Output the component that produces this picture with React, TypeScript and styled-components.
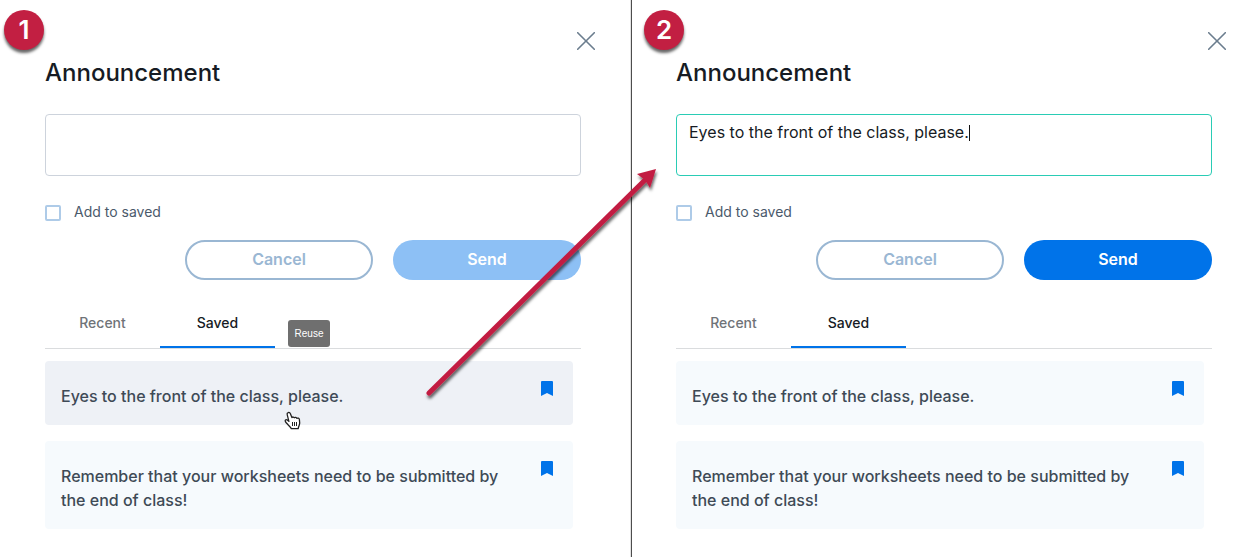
import React, { useId, useState } from "react";
import styled, { createGlobalStyle, css } from "styled-components";

const GlobalStyle = createGlobalStyle`
  * { box-sizing: border-box; }
  body {
    margin: 0;
    background: #fff;
    color: #3e4a56;
    font-family: Inter, "Open Sans", sans-serif;
  }
  button, textarea { font-family: inherit; }
`;

const Page = styled.main`
  position: relative;
  display: grid;
  grid-template-columns: calc(50% + 1px) minmax(0, 1fr);
  min-height: 100vh;
  overflow: hidden;
`;

const Panel = styled.section<{ $divided?: boolean }>`
  position: relative;
  padding: 32px 50px 28px 45px;
  ${(p) =>
    p.$divided &&
    css`
      padding: 32px 48px 28px 44px;
      border-left: 1px solid #4d4d4d;
      box-shadow: 0 0 0 1px #e2e2e2;
    `}
`;

const StepBadge = styled.span<{ $left: number }>`
  position: absolute;
  top: 10px;
  left: ${(p) => p.$left}px;
  display: grid;
  place-items: center;
  width: 40px;
  height: 40px;
  border-radius: 50%;
  background: #c21f42;
  box-shadow: 0 3px 3px rgba(0, 0, 0, 0.6);
  color: #fff;
  font-size: 26px;
  font-weight: 600;
  line-height: 40px;
`;

const TopRow = styled.div`
  display: flex;
  justify-content: flex-end;
  height: 18px;
  margin-right: -14px;
`;

const CloseButton = styled.button`
  width: 18px;
  height: 18px;
  padding: 0;
  border: 0;
  background: none;
  svg { display: block; }
`;

const Title = styled.h1`
  margin: 7px 0 25px;
  color: #161b24;
  font-size: 24px;
  font-weight: 500;
  line-height: 32px;
`;

const Field = styled.div`
  position: relative;
`;

const messageBox = css`
  padding: 5px 12px;
  border: 1px solid transparent;
  font-size: 16px;
  font-weight: 400;
  line-height: 24px;
  white-space: pre-wrap;
`;

const Message = styled.textarea<{ $active: boolean }>`
  ${messageBox}
  display: block;
  width: 100%;
  height: 62px;
  border-color: ${(p) => (p.$active ? "#2accb5" : "#cdd3dc")};
  border-radius: 4px;
  outline: 0;
  resize: none;
  background: #fff;
  color: #161b24;
`;

const CaretLayer = styled.div`
  ${messageBox}
  position: absolute;
  inset: 0;
  color: transparent;
  pointer-events: none;
`;

const Caret = styled.i`
  display: inline-block;
  width: 1px;
  height: 16px;
  background: #111;
  vertical-align: -3px;
`;

const SaveRow = styled.label`
  display: flex;
  align-items: center;
  gap: 13px;
  width: max-content;
  height: 20px;
  margin-top: 26px;
  color: #4b5a6b;
  font-size: 14px;
  line-height: 20px;
`;

const Checkbox = styled.input`
  appearance: none;
  width: 16px;
  height: 16px;
  margin: 2px 0 0;
  border: 2px solid #aecbe8;
  border-radius: 2px;
  background: #fff;
  &:checked { background: #0073e9; }
`;

const Actions = styled.div`
  display: flex;
  justify-content: flex-end;
  gap: 20px;
  margin-top: 18px;
`;

const PillButton = styled.button<{ $primary?: boolean }>`
  width: 188px;
  height: 40px;
  padding: 0 0 2px;
  border: 2px solid #9ab7d3;
  border-radius: 20px;
  background: #fff;
  color: #9ab7d3;
  font-size: 16px;
  font-weight: 600;
  ${(p) =>
    p.$primary &&
    css`
      border: 0;
      background: #0073e9;
      color: #fff;
      &:disabled { background: #8dc0f5; }
    `}
`;

const Tabs = styled.div`
  display: flex;
  margin-top: 18px;
  border-bottom: 1px solid #dadcde;
`;

const Tab = styled.button<{ $selected: boolean }>`
  width: 115px;
  height: 50px;
  padding: 0;
  border: 0;
  border-bottom: 2px solid ${(p) => (p.$selected ? "#0073e9" : "transparent")};
  background: none;
  color: ${(p) => (p.$selected ? "#161b24" : "#6f7378")};
  font-size: 14px;
  font-weight: 500;
`;

const SavedList = styled.ul`
  display: grid;
  gap: 16px;
  margin: 12px 8px 0 0;
  padding: 0;
  list-style: none;
`;

const SavedItem = styled.li<{ $hovered: boolean }>`
  position: relative;
  display: flex;
  align-items: flex-start;
  justify-content: space-between;
  gap: 24px;
  padding: 20px 20px 16px 16px;
  border-radius: 4px;
  background: ${(p) => (p.$hovered ? "#eef1f6" : "#f6fafd")};
`;

const ReuseButton = styled.button`
  padding: 3px 0 1px;
  border: 0;
  background: none;
  color: #3e4a56;
  font-size: 16px;
  font-weight: 500;
  line-height: 24px;
  text-align: left;
`;

const BookmarkButton = styled.button`
  flex: none;
  padding: 0;
  border: 0;
  background: none;
  svg { display: block; }
`;

const Tooltip = styled.span`
  position: absolute;
  top: -41px;
  left: 243px;
  width: 42px;
  border-radius: 3px;
  background: #6f6f6f;
  color: #fff;
  font: 10px/27px "Liberation Sans", sans-serif;
  text-align: center;
`;

const Pointer = styled.svg`
  position: absolute;
  top: 50px;
  left: 239px;
`;

const Arrow = styled.svg`
  position: absolute;
  top: 160px;
  left: calc(50% - 210px);
  pointer-events: none;
`;

const messages = [
  "Eyes to the front of the class, please.",
  "Remember that your worksheets need to be submitted by the end of class!",
];

function HandPointer() {
  return (
    <Pointer width="17" height="19" viewBox="0 0 17 19" aria-hidden="true">
      <path
        d="M4.2 1.6C5.2 1.2 6 1.8 6.4 2.8L7.9 6.6C8.6 5.7 9.8 5.9 10.3 6.8 11.1 6.1 12.4 6.4 12.8 7.3 13.8 6.8 15.2 7.2 15.4 8.5L15.7 12C15.7 14 14.6 15 14.2 17.6H7.3C6.4 15.8 4.4 14.2 2.4 12 1.4 10.9.8 9.5 1.5 8.9 2.4 8.2 3.6 9 4.9 10.4L3.2 3.7C2.9 2.7 3.3 1.9 4.2 1.6Z"
        fill="#fff"
        stroke="#222"
        strokeWidth="1.3"
        strokeLinejoin="round"
      />
      <path d="M8.5 11V15M10.5 11V15M12.5 11V15" stroke="#222" />
    </Pointer>
  );
}

interface PanelProps {
  step: number;
  initialText?: string;
  hoveredItem?: number;
}

function AnnouncementPanel({ step, initialText = "", hoveredItem }: PanelProps) {
  const id = useId();
  const [text, setText] = useState(initialText);
  const [tab, setTab] = useState("Saved");
  const filled = text.length > 0;

  return (
    <Panel $divided={step > 1} aria-labelledby={`${id}-title`}>
      <StepBadge $left={step > 1 ? 12 : 4}>{step}</StepBadge>
      <TopRow>
        <CloseButton type="button" aria-label="Close">
          <svg width="18" height="18" viewBox="0 0 18 18" fill="none" stroke="#6b7d8e" strokeWidth="1.6" strokeLinecap="round">
            <path d="M.7.7 17.3 17.3M17.3.7.7 17.3" />
          </svg>
        </CloseButton>
      </TopRow>
      <Title id={`${id}-title`}>Announcement</Title>
      <Field>
        <Message
          aria-labelledby={`${id}-title`}
          value={text}
          $active={filled}
          onChange={(e) => setText(e.target.value)}
        />
        {filled && (
          <CaretLayer aria-hidden="true">
            {text}
            <Caret />
          </CaretLayer>
        )}
      </Field>
      <SaveRow>
        <Checkbox type="checkbox" />
        Add to saved
      </SaveRow>
      <Actions>
        <PillButton type="button">Cancel</PillButton>
        <PillButton type="button" $primary disabled={!filled}>
          Send
        </PillButton>
      </Actions>
      <Tabs role="tablist">
        {["Recent", "Saved"].map((name) => (
          <Tab
            key={name}
            type="button"
            role="tab"
            aria-selected={tab === name}
            $selected={tab === name}
            onClick={() => setTab(name)}
          >
            {name}
          </Tab>
        ))}
      </Tabs>
      <SavedList>
        {messages.map((message, i) => (
          <SavedItem key={message} $hovered={hoveredItem === i}>
            <ReuseButton type="button" onClick={() => setText(message)}>
              {message}
            </ReuseButton>
            <BookmarkButton type="button" aria-label="Remove from saved">
              <svg width="12" height="15" viewBox="0 0 12 15" fill="#0073e9">
                <path d="M1 0H11Q12 0 12 1V15L6 12 0 15V1Q0 0 1 0Z" />
              </svg>
            </BookmarkButton>
            {hoveredItem === i && (
              <>
                <Tooltip role="tooltip">Reuse</Tooltip>
                <HandPointer />
              </>
            )}
          </SavedItem>
        ))}
      </SavedList>
    </Panel>
  );
}

export default function App() {
  return (
    <>
      <GlobalStyle />
      <Page>
        <AnnouncementPanel step={1} hoveredItem={0} />
        <AnnouncementPanel step={2} initialText={messages[0]} />
        <Arrow width="250" height="250" viewBox="420 160 250 250" aria-hidden="true">
          <defs>
            <filter id="arrow-shadow" x="-10%" y="-10%" width="120%" height="120%">
              <feDropShadow dx="1" dy="3" stdDeviation="1.6" floodOpacity="0.6" />
            </filter>
          </defs>
          <g filter="url(#arrow-shadow)" fill="#c21f42">
            <path d="M429 393 648 177" stroke="#c21f42" strokeWidth="5" strokeLinecap="round" />
            <path d="M656 169 637 174 645 180 650 188Z" />
          </g>
        </Arrow>
      </Page>
    </>
  );
}
